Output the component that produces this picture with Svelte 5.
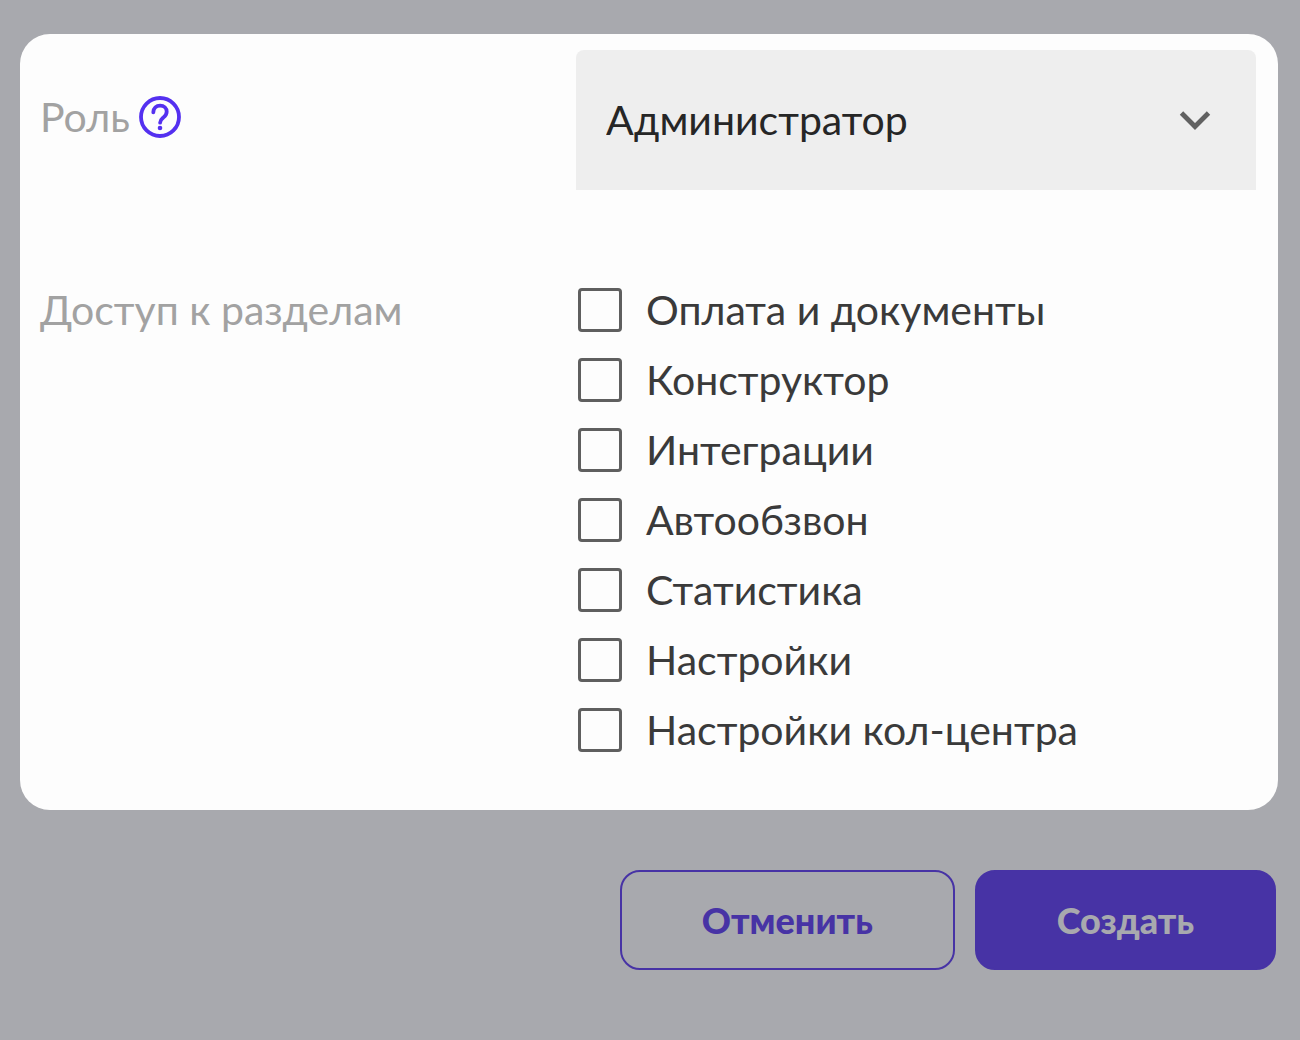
<script>
  let role = 'admin';
  let sections = [
    { id: 'billing', label: 'Оплата и документы', checked: false },
    { id: 'builder', label: 'Конструктор', checked: false },
    { id: 'integrations', label: 'Интеграции', checked: false },
    { id: 'autocall', label: 'Автообзвон', checked: false },
    { id: 'stats', label: 'Статистика', checked: false },
    { id: 'settings', label: 'Настройки', checked: false },
    { id: 'callcenter', label: 'Настройки кол-центра', checked: false }
  ];
</script>

<form class="page" on:submit|preventDefault>
  <div class="card">
    <div class="row">
      <div class="title role-title">
        <label for="role">Роль</label>
        <button class="help" type="button" aria-label="Подсказка">
          <svg viewBox="0 0 42 42" width="42" height="42" fill="none" stroke="#5430f0">
            <circle cx="21" cy="21" r="19" stroke-width="3.8" />
            <path
              d="M14.3 16.3c.2-4.2 3-6.6 6.8-6.6 3.9 0 6.6 2.6 6.6 6.1 0 2.6-1.3 4-3.2 5.6-2.1 1.8-3.4 2.7-3.4 5.3"
              stroke-width="3.8"
              stroke-linecap="round"
            />
            <circle cx="21" cy="32" r="2.3" fill="#5430f0" stroke="none" />
          </svg>
        </button>
      </div>
      <div class="select">
        <select id="role" bind:value={role}>
          <option value="admin">Администратор</option>
        </select>
        <svg class="arrow" viewBox="0 0 32 20" width="32" height="20" fill="none" stroke="#616161">
          <path d="M2.5 3L16 16.5 29.5 3" stroke-width="4.8" />
        </svg>
      </div>
    </div>

    <fieldset class="row">
      <legend class="title">Доступ к разделам</legend>
      <div class="sections">
        {#each sections as section (section.id)}
          <label class="section">
            <input type="checkbox" bind:checked={section.checked} />
            {section.label}
          </label>
        {/each}
      </div>
    </fieldset>
  </div>

  <div class="actions">
    <button class="btn cancel" type="button">Отменить</button>
    <button class="btn create" type="submit">Создать</button>
  </div>
</form>

<style>
  :global(body) {
    margin: 0;
    background: #a8a9ae;
  }

  .page {
    box-sizing: border-box;
    min-height: 100vh;
    padding: 34px 22px 34px 20px;
    font-family: Lato, 'Open Sans', sans-serif;
    font-size: 41px;
    line-height: 50px;
    color: #3a3a3a;
  }

  .card {
    padding: 16px 22px 45px 20px;
    background: #fdfdfd;
    border-radius: 30px;
  }

  .row {
    display: flex;
    margin: 0;
    padding: 0;
    border: none;
  }

  .title {
    flex: 1;
    color: #a2a2a2;
  }

  .role-title {
    display: flex;
    align-items: center;
    gap: 9px;
    height: 134px;
  }

  .help {
    display: flex;
    padding: 0;
    border: none;
    background: none;
    cursor: pointer;
  }

  .select {
    position: relative;
    width: 680px;
  }

  select {
    display: block;
    width: 100%;
    height: 140px;
    padding: 0 80px 0 30px;
    border: none;
    border-radius: 8px 8px 0 0;
    background: #eee;
    color: #262626;
    font: inherit;
    appearance: none;
  }

  .arrow {
    position: absolute;
    top: 60px;
    right: 45px;
    pointer-events: none;
  }

  fieldset.row {
    margin-top: 85px;
  }

  legend {
    float: left;
    padding: 0;
    margin-top: 10px;
  }

  .sections {
    width: 680px;
  }

  .section {
    display: flex;
    align-items: center;
    gap: 24px;
    height: 70px;
    cursor: pointer;
  }

  input {
    width: 44px;
    height: 44px;
    margin: 0 0 0 2px;
    border: 3px solid #5f5f5f;
    border-radius: 4px;
    background: #fdfdfd;
    appearance: none;
  }

  input:checked {
    background: #4733a5;
  }

  .actions {
    display: flex;
    justify-content: flex-end;
    gap: 20px;
    padding: 60px 2px 0 0;
  }

  .btn {
    height: 100px;
    padding: 0 80px;
    border: 2px solid #4733a5;
    border-radius: 20px;
    font: inherit;
    font-size: 36px;
    font-weight: 900;
    cursor: pointer;
  }

  .cancel {
    background: none;
    color: #4733a5;
  }

  .create {
    background: #4733a5;
    color: #a8a9ae;
  }
</style>
